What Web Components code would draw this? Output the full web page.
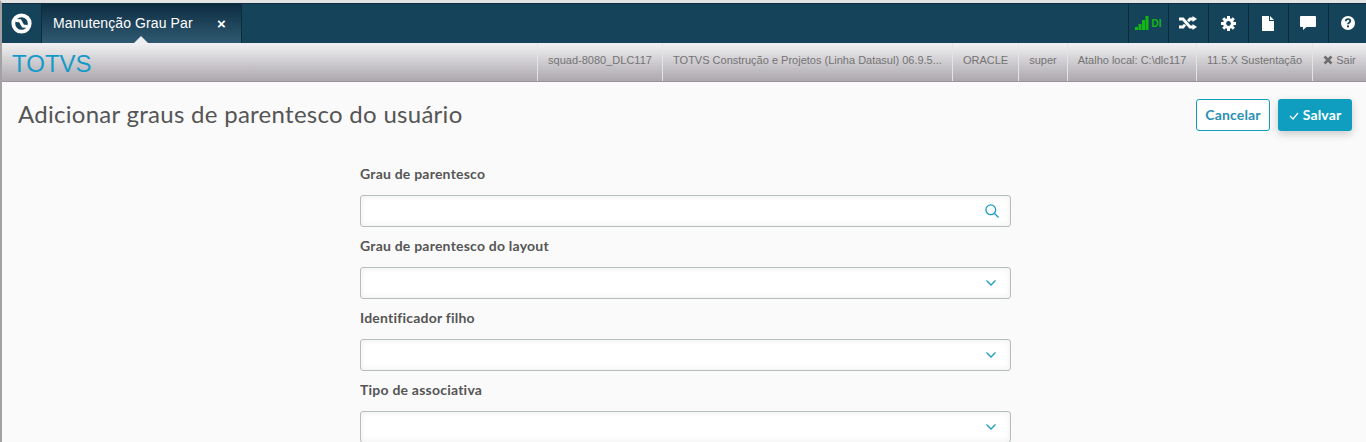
<!DOCTYPE html>
<html lang="pt">
<head>
<meta charset="utf-8">
<title>Adicionar graus de parentesco</title>
<style>
  html, body { margin: 0; padding: 0; height: 442px; overflow: hidden; background: #fafafa; }
  body { font-family: "Liberation Sans", Arial, sans-serif; }
</style>
</head>
<body>
<app-shell>
  <top-bar></top-bar>
  <info-bar>
    <info-item style="width:125px">squad-8080_DLC117</info-item>
    <info-item style="width:290px">TOTVS Construção e Projetos (Linha Datasul) 06.9.5...</info-item>
    <info-item style="width:66px">ORACLE</info-item>
    <info-item style="width:49px">super</info-item>
    <info-item style="width:129px">Atalho local: C:\dlc117</info-item>
    <info-item style="width:116px">11.5.X Sustentação</info-item>
    <info-item style="width:54px" exit>Sair</info-item>
  </info-bar>
  <page-header title="Adicionar graus de parentesco do usuário"></page-header>
  <form-area>
    <form-field label="Grau de parentesco" icon="search"></form-field>
    <form-field label="Grau de parentesco do layout" icon="chevron"></form-field>
    <form-field label="Identificador filho" icon="chevron"></form-field>
    <form-field label="Tipo de associativa" icon="chevron"></form-field>
  </form-area>
</app-shell>

<script>
  function define(name, css, html) {
    window.customElements.define(
      name,
      class extends HTMLElement {
        constructor() {
          super();
          const root = this.attachShadow({ mode: "open" });
          root.innerHTML = `<style>${css}</style>${typeof html === "function" ? html(this) : html}`;
        }
      }
    );
  }

  define("app-shell", `
    :host {
      display: block;
      height: 439px;
      overflow: hidden;
      border-top: 3px solid #e4e4e4;
      border-left: 2px solid #a2a2a2;
    }
  `, `<slot></slot>`);

  // Top dark bar: logo, open tab and the tool buttons
  window.customElements.define(
    "top-bar",
    class extends HTMLElement {
      constructor() {
        super();
        const root = this.attachShadow({ mode: "open" });
        root.innerHTML = `
    <style>
      :host {
        display: flex;
        height: 40px;
        background: #15445a;
        box-shadow: inset 0 1px 0 #0e3042;
        color: #fff;
      }
      .logo {
        width: 39px;
        display: flex;
        align-items: center;
        justify-content: center;
        border-right: 1px solid #0c2c3d;
      }
      .tab {
        width: 200px;
        box-sizing: border-box;
        position: relative;
        display: flex;
        align-items: center;
        padding-left: 11px;
        border-right: 1px solid #0c2c3d;
        background: linear-gradient(#0c2b40, #2f5a72);
        font-size: 14px;
      }
      .tab .name { width: 139px; white-space: nowrap; letter-spacing: .1px; }
      .tab .close { margin-left: 25px; font-size: 15px; font-weight: 700; }
      .tab::after {
        content: "";
        position: absolute;
        left: 92px;
        bottom: 0;
        border: 7px solid transparent;
        border-top: 0;
        border-bottom-color: #eeeef0;
      }
      .tools { margin-left: auto; display: flex; }
      .tool {
        width: 38px;
        margin-left: 1px;
        border-left: 1px solid #0c2c3d;
        display: flex;
        align-items: center;
        justify-content: center;
      }
      .tool:last-child { width: 37px; }
      .signal { gap: 3px; color: #13b813; font-size: 10px; font-weight: 700; }
      svg { display: block; }
    </style>
    <div class="logo">
      <svg width="21" height="21" viewBox="0 0 21 21">
        <circle cx="10.500" cy="10.500" r="8.200" fill="none" stroke="#fff" stroke-width="3.800"/>
        <path d="M4.500 7.500 L9 7.800 L12 13 L16.500 13.500" fill="none" stroke="#fff" stroke-width="3"/>
      </svg>
    </div>
    <div class="tab"><span class="name">Manutenção Grau Par</span><span class="close">×</span></div>
    <div class="tools">
      <div class="tool signal">
        <svg width="14" height="14" viewBox="0 0 14 14" fill="#13b813">
          <rect x="0" y="11" width="3" height="3"/><rect x="3.500" y="8" width="3" height="6"/>
          <rect x="7" y="4" width="3" height="10"/><rect x="10.500" y="0" width="3" height="14"/>
        </svg>
        <span>DI</span>
      </div>
      <div class="tool">
        <svg width="18" height="14" viewBox="0 0 18 14" fill="none" stroke="#fff" stroke-width="2.800">
          <path d="M0 3h4l7 8h3M0 11h4l2-2.300M9 5.200L11 3h3"/>
          <path d="M13.500 0l4.500 3-4.500 3zM13.500 8l4.500 3-4.500 3z" fill="#fff" stroke="none"/>
        </svg>
      </div>
      <div class="tool">
        <svg width="15" height="15" viewBox="0 0 15 15">
          <circle cx="7.500" cy="7.500" r="3.900" fill="none" stroke="#fff" stroke-width="3"/>
          <g fill="#fff">
            <rect x="6" y="0" width="3" height="15"/>
            <rect x="6" y="0" width="3" height="15" transform="rotate(45 7.500 7.500)"/>
            <rect x="6" y="0" width="3" height="15" transform="rotate(90 7.500 7.500)"/>
            <rect x="6" y="0" width="3" height="15" transform="rotate(135 7.500 7.500)"/>
          </g>
          <circle cx="7.500" cy="7.500" r="2.400" fill="#15445a"/>
        </svg>
      </div>
      <div class="tool">
        <svg width="12" height="15" viewBox="0 0 12 15">
          <path fill="#fff" d="M0 0h7v5h5v10H0z"/><path fill="#fff" d="M8 0l4 4H8z"/>
        </svg>
      </div>
      <div class="tool">
        <svg width="16" height="14" viewBox="0 0 16 14">
          <path fill="#fff" d="M1 0h14a1 1 0 0 1 1 1v9a1 1 0 0 1-1 1H6.500L3 14v-3H1a1 1 0 0 1-1-1V1a1 1 0 0 1 1-1z"/>
        </svg>
      </div>
      <div class="tool">
        <svg width="14" height="14" viewBox="0 0 14 14">
          <circle cx="7" cy="7" r="7" fill="#fff"/>
          <path d="M4.700 5.200C4.800 3.900 5.700 3.200 7 3.200c1.400 0 2.300.8 2.300 1.900 0 1.700-2.300 1.700-2.300 3.200" fill="none" stroke="#15445a" stroke-width="1.800"/>
          <rect x="6" y="9.400" width="2" height="1.900" fill="#15445a"/>
        </svg>
      </div>
    </div>
    `;
      }
    }
  );

  define("info-bar", `
    :host {
      display: flex;
      height: 38px;
      border-bottom: 1px solid #98949a;
      background: linear-gradient(#f1f1f3, #aca7ad);
    }
    .brand {
      margin-right: auto;
      padding: 7px 0 0 10px;
      color: #149ac9;
      font-size: 24px;
      line-height: 28px;
    }
  `, `<div class="brand">TOTVS</div><slot></slot>`);

  define("info-item", `
    :host {
      display: flex;
      align-items: center;
      justify-content: center;
      box-sizing: border-box;
      height: 38px;
      border-left: 1px solid #e4e4e6;
      color: #737373;
      font-size: 11px;
      white-space: nowrap;
      padding-bottom: 4px;
    }
    svg { margin-right: 3px; }
  `, (el) => `${el.hasAttribute("exit") ? `<svg width="10" height="10" viewBox="0 0 10 10"><path d="M1.500 1.500l7 7M8.500 1.500l-7 7" stroke="#6e6e6e" stroke-width="2.600"/></svg>` : ""}<slot></slot>`);

  window.customElements.define(
    "page-header",
    class extends HTMLElement {
      constructor() {
        super();
        const root = this.attachShadow({ mode: "open" });
        root.innerHTML = `
    <style>
      :host {
        display: flex;
        align-items: center;
        padding: 17px 14px 0 16px;
        height: 32px;
        font-family: Lato, sans-serif;
      }
      h1 {
        margin: 0 0 4px;
        font-size: 24px;
        font-weight: 400;
        color: #555;
        letter-spacing: .28px;
      }
      .actions { margin-left: auto; display: flex; gap: 8px; }
      button {
        height: 32px;
        box-sizing: border-box;
        border-radius: 3px;
        font: 700 14px Lato, sans-serif;
        letter-spacing: .15px;
        padding: 0 0 2px;
      }
      .cancel { width: 74px; background: #fff; border: 1px solid #0f9ec0; color: #2b8fb3; }
      .save {
        width: 74px;
        background: #0f9ec0;
        border: 0;
        color: #fff;
        box-shadow: 0 3px 8px rgba(0,0,0,.2);
      }
      .save svg { margin-right: 4px; }
    </style>
    <h1></h1>
    <div class="actions">
      <button class="cancel">Cancelar</button>
      <button class="save"><svg width="10" height="8" viewBox="0 0 10 8"><path d="M1 4l3 3 5-6" fill="none" stroke="#fff" stroke-width="1.200"/></svg>Salvar</button>
    </div>
    `;
        root.querySelector("h1").textContent = this.getAttribute("title");
      }
    }
  );

  define("form-area", `
    :host {
      display: flex;
      flex-direction: column;
      gap: 10px;
      width: 651px;
      margin: 34px 0 0 358px;
      font-family: Lato, sans-serif;
    }
  `, `<slot></slot>`);

  window.customElements.define(
    "form-field",
    class extends HTMLElement {
      constructor() {
        super();
        const root = this.attachShadow({ mode: "open" });
        const chevron = `<svg style="margin-right:14px" width="10" height="6" viewBox="0 0 10 6"><path d="M.5.500L5 5 9.500.500" fill="none" stroke="#1a9cc4" stroke-width="1.300"/></svg>`;
        const search = `<svg style="margin-right:11px" width="14" height="14" viewBox="0 0 15 15" fill="none" stroke="#1a9cc4" stroke-width="1.400"><circle cx="6.200" cy="6.200" r="5.200"/><path d="M10 10l4.500 4.500"/></svg>`;
        root.innerHTML = `
    <style>
      :host { display: block; flex: none; height: 62px; }
      label {
        display: block;
        height: 30px;
        color: #555;
        font-size: 14px;
        font-weight: 700;
        line-height: 17px;
        letter-spacing: .22px;
      }
      .box {
        height: 32px;
        box-sizing: border-box;
        display: flex;
        align-items: center;
        justify-content: flex-end;
        background: #fff;
        border: 1px solid #b6bdbd;
        border-radius: 3px;
        box-shadow: inset 0 0 6px rgba(0,0,0,.08);
      }
    </style>
    <label></label>
    <div class="box">${this.getAttribute("icon") === "search" ? search : chevron}</div>
    `;
        root.querySelector("label").textContent = this.getAttribute("label");
      }
    }
  );
</script>
</body>
</html>
